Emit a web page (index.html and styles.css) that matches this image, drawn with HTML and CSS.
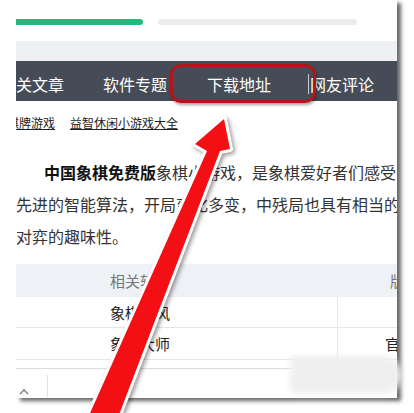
FILE: index.html
```html
<!DOCTYPE html>
<html lang="zh-CN">
<head>
  <meta charset="UTF-8" />
  <title>中国象棋免费版</title>
  <link rel="stylesheet" href="styles.css">
</head>
<body>
  <div class="page">
    <div class="shot">
      <div class="progress">
        <span class="bar green"></span>
        <span class="bar gray"></span>
      </div>
      <div class="band"></div>

      <nav class="tabs">
        <span class="tab">相关文章</span>
        <span class="tab">软件专题</span>
        <span class="tab">下载地址</span>
        <span class="tab sep">网友评论</span>
      </nav>

      <div class="links">
        <a>棋牌游戏</a>
        <a>益智休闲小游戏大全</a>
      </div>

      <p class="intro">
        <span class="first"><b>中国象棋免费版</b>象棋小游戏，是象棋爱好者们感受象棋魅力的</span>
        <span>先进的智能算法，开局变化多变，中残局也具有相当的水平</span>
        <span>对弈的趣味性。</span>
      </p>

      <div class="table">
        <div class="row head">
          <div class="cell name">相关软件</div>
          <div class="cell ver">版本</div>
        </div>
        <div class="row">
          <div class="cell name">象棋旋风</div>
          <div class="cell ver"></div>
        </div>
        <div class="row">
          <div class="cell name">象棋大师</div>
          <div class="cell ver off">官方</div>
        </div>
      </div>

      <div class="footer">
        <svg class="up" width="31" height="10" viewBox="0 0 31 10">
          <polyline points="4,8 8,4 12,8" fill="none" stroke="#888" stroke-width="1.6" />
        </svg>
        <span class="divider"></span>
      </div>
    </div>

    <div class="mark"></div>
    <div class="highlight"></div>

    <svg class="arrow" width="414" height="413" viewBox="0 0 414 413">
      <polygon points="224,119 230,149 220,151 117,420 87,420 207,151 195,144"
               fill="#f40f14" stroke="#ffffff" stroke-width="6"
               stroke-linejoin="round" paint-order="stroke" />
    </svg>
  </div>
</body>
</html>
```

FILE: styles.css
```css
body {
  margin: 0;
  background: #fff;
  font-family: "Noto Sans CJK SC", "Noto Sans", sans-serif;
  color: #333;
}

.page {
  position: relative;
  width: 414px;
  height: 413px;
  overflow: hidden;
}

/* the captured page, clipped on the left */
.shot {
  margin-left: 16px;
  width: 381px;
  height: 398px;
  overflow: hidden;
  background: #fff;
  box-shadow: 4px 3px 4px rgba(0, 0, 0, 0.6);
}

.progress {
  display: flex;
  gap: 15px;
  padding-top: 19px;
  height: 6px;
  margin-bottom: 16px;
}

.bar {
  height: 6px;
  border-radius: 0 3px 3px 0;
}

.bar.green {
  width: 127px;
  background: #1fbb7c;
}

.bar.gray {
  width: 199px;
  background: #ececec;
  border-radius: 3px;
}

.band {
  height: 20px;
  background: #eef0f4;
}

.tabs {
  display: flex;
  gap: 40px;
  height: 40px;
  align-items: center;
  padding-top: 6px;
  box-sizing: border-box;
  margin-left: -16px;
  background: #454c57;
  white-space: nowrap;
}

.tab {
  color: #fff;
  font-size: 16px;
  line-height: 20px;
}

.tab:nth-child(2) {
  margin-left: -1px;
}

.tab.sep {
  border-left: 1px solid #c9cdd3;
  padding-left: 1px;
  margin-left: -3px;
}

.links {
  display: flex;
  gap: 15px;
  margin: 12px 0 0 -9px;
  font-size: 12px;
  line-height: 20px;
  white-space: nowrap;
}

.links a {
  color: #222;
  text-decoration: underline;
}

.intro {
  margin: 23px 0 0;
  font-size: 16px;
  line-height: 32px;
  white-space: nowrap;
  color: #333;
}

.intro span {
  display: block;
}

.intro .first {
  text-indent: 28px;
}

.intro b {
  color: #111;
}

.table {
  margin-top: 12px;
  font-size: 15px;
}

.row {
  display: flex;
  height: 32px;
  align-items: center;
  border-bottom: 1px solid #e6e6e6;
  box-sizing: border-box;
}

.row.head {
  height: 33px;
  background: #eef1f6;
  border-bottom: none;
}

.row:nth-child(2) {
  height: 31px;
}

.cell {
  flex-shrink: 0;
  height: 100%;
  display: flex;
  align-items: center;
  white-space: nowrap;
  color: #222;
}

.head .cell {
  color: #777;
}

.cell.name {
  width: 322px;
  padding-left: 94px;
  box-sizing: border-box;
  border-right: 1px solid #e6e6e6;
}

.head .cell.name {
  border-right: none;
}

.cell.ver {
  padding-left: 52px;
}

.cell.ver.off {
  padding-left: 47px;
}

.footer {
  display: flex;
  align-items: flex-end;
  height: 29px;
  margin-top: 8px;
  border-top: 1px solid #dcdcdc;
  box-sizing: border-box;
}

.up {
  flex-shrink: 0;
  margin-bottom: 1px;
}

.divider {
  width: 1px;
  height: 22px;
  background: #e2e2e2;
}

/* blurred watermark over the bottom right corner */
.mark {
  position: absolute;
  left: 290px;
  top: 356px;
  width: 112px;
  height: 38px;
  border-radius: 6px 19px 19px 6px;
  background: #efefef;
  filter: blur(3px);
}

.highlight {
  position: absolute;
  left: 170px;
  top: 64px;
  width: 146px;
  height: 39px;
  box-sizing: border-box;
  border: 3px solid #b3151b;
  border-radius: 11px;
  box-shadow: 1px 2px 3px rgba(0, 0, 0, 0.35);
}

.arrow {
  position: absolute;
  left: 0;
  top: 0;
  filter: drop-shadow(2px 2px 2px rgba(0, 0, 0, 0.4));
}
```
